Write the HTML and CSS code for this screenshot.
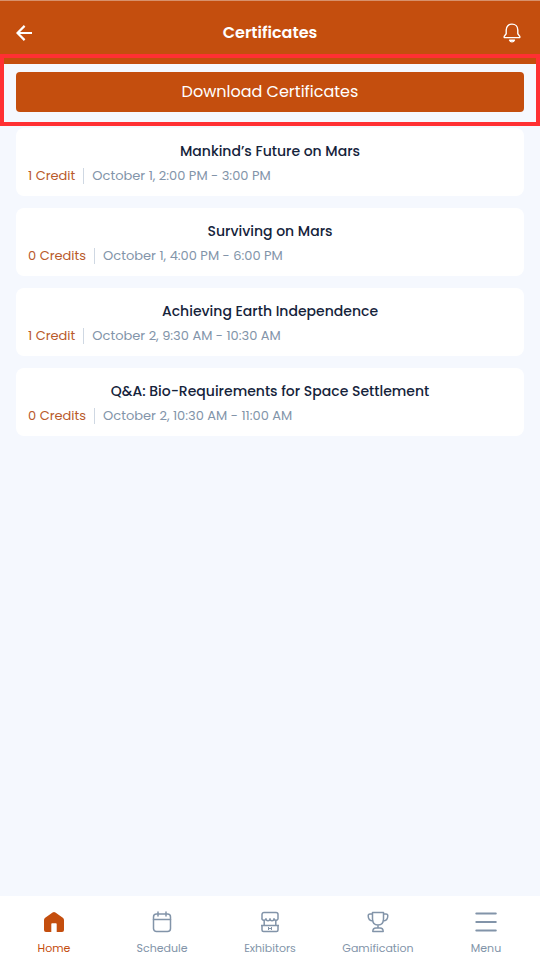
FILE: index.html
```html
<!DOCTYPE html>
<html lang="en">
<head>
<meta charset="utf-8">
<meta name="viewport" content="width=device-width, initial-scale=1">
<title>Certificates</title>
<link rel="stylesheet" href="styles.css">
</head>
<body>
<header class="topbar">
  <button class="icon-button" type="button" aria-label="Back">
    <svg width="16" height="16" viewBox="0 0 16 16" fill="none" stroke="currentColor" stroke-width="2.2"><path d="M16 8H1.8M8.6 .9L1.5 8l7.1 7.1"/></svg>
  </button>
  <h1 class="topbar-title">Certificates</h1>
  <button class="icon-button icon-button-end" type="button" aria-label="Notifications">
    <svg width="18" height="20" viewBox="0 0 18 20" fill="none" stroke="currentColor" stroke-width="1.4" stroke-linejoin="round" stroke-linecap="round"><path d="M1.200 14.600V13.400L3.200 10.800V7C3.200 3.400 5.600 1.100 9 1.100S14.800 3.400 14.800 7v3.800l2 2.600v1.200z"/><path d="M6.600 17.200c.5 1.200 1.300 1.700 2.400 1.700s1.900-.5 2.400-1.700z"/></svg>
  </button>
</header>
<main class="content">
  <section class="download">
    <button class="download-button" type="button">Download Certificates</button>
  </section>
  <ul class="sessions">
    <li class="session">
      <h2 class="session-title">Mankind’s Future on Mars</h2>
      <div class="session-meta"><span class="credits">1 Credit</span><span class="time">October 1, 2:00 PM - 3:00 PM</span></div>
    </li>
    <li class="session">
      <h2 class="session-title">Surviving on Mars</h2>
      <div class="session-meta"><span class="credits">0 Credits</span><span class="time">October 1, 4:00 PM - 6:00 PM</span></div>
    </li>
    <li class="session">
      <h2 class="session-title">Achieving Earth Independence</h2>
      <div class="session-meta"><span class="credits">1 Credit</span><span class="time">October 2, 9:30 AM - 10:30 AM</span></div>
    </li>
    <li class="session">
      <h2 class="session-title">Q&amp;A: Bio-Requirements for Space Settlement</h2>
      <div class="session-meta"><span class="credits">0 Credits</span><span class="time">October 2, 10:30 AM - 11:00 AM</span></div>
    </li>
  </ul>
</main>
<nav class="tabs" aria-label="Main">
  <a class="tab tab-active" href="#home">
    <svg class="tab-icon" viewBox="0 0 24 24" fill="currentColor"><path d="M10.600 2.600a2.300 2.300 0 0 1 2.800 0l7.400 5.200c.8.600 1.200 1.300 1.200 2.300V20a2 2 0 0 1-2 2h-5.300v-8a.8.800 0 0 0-.8-.8h-3.800a.8.800 0 0 0-.8.800v8H4a2 2 0 0 1-2-2v-9.900c0-1 .4-1.700 1.200-2.300z"/></svg>
    <span>Home</span>
  </a>
  <a class="tab" href="#schedule">
    <svg class="tab-icon" viewBox="0 0 24 24" fill="none" stroke="currentColor" stroke-width="1.500" stroke-linecap="round"><rect x="3.500" y="4" width="17" height="17.500" rx="3"/><path d="M3.500 9.500h17M8 2v4M16 2v4"/></svg>
    <span>Schedule</span>
  </a>
  <a class="tab" href="#exhibitors">
    <svg class="tab-icon" viewBox="0 0 24 24" fill="none" stroke="currentColor" stroke-width="1.500" stroke-linejoin="round"><path d="M6 2.500h12a2 2 0 0 1 2 2v3.200a2 2 0 0 1-4 1 2 2 0 0 1-4 0 2 2 0 0 1-4 0 2 2 0 0 1-4-1V4.500a2 2 0 0 1 2-2zM6.200 10v5.500M17.800 10v5.500M3 15.500h18M4 15.500V20a1.500 1.500 0 0 0 1.500 1.500h13A1.500 1.500 0 0 0 20 20v-4.500"/><path d="M10.500 17v3M13.500 17v3M10.500 18.500h3" stroke-width="1"/></svg>
    <span>Exhibitors</span>
  </a>
  <a class="tab" href="#gamification">
    <svg class="tab-icon" viewBox="0 0 24 24" fill="none" stroke="currentColor" stroke-width="1.500" stroke-linejoin="round" stroke-linecap="round"><path d="M6.500 2.500h11V9c0 3.500-2 6-5.500 6S6.500 12.500 6.500 9zM6.500 4H4C2.800 4 2.200 4.600 2.200 5.800 2.200 9 4 11 7 11M17.500 4H20c1.200 0 1.800.6 1.800 1.800C21.800 9 20 11 17 11M12 15v3M6.800 21.500c0-2.200 1.200-3.500 3.200-3.500h4c2 0 3.200 1.300 3.200 3.500z"/></svg>
    <span>Gamification</span>
  </a>
  <a class="tab" href="#menu">
    <svg class="tab-icon" viewBox="0 0 24 24" fill="none" stroke="currentColor" stroke-width="2" stroke-linecap="round"><path d="M2.300 3.500h19.500M2.300 12h19.500M2.300 20.500h19.500"/></svg>
    <span>Menu</span>
  </a>
</nav>
</body>
</html>
```
FILE: styles.css
```css
:root {
  --brand: #c44e0e;
  --ink: #15233b;
  --muted: #8294a9;
  --page: #f5f8fe;
  --highlight: #ff3033;
}

* {
  box-sizing: border-box;
}

body {
  display: flex;
  flex-direction: column;
  min-height: 100vh;
  margin: 0;
  background: var(--page);
  color: var(--ink);
  font-family: Poppins, Inter, sans-serif;
}

button {
  border: 0;
  padding: 0;
  font: inherit;
  color: inherit;
  cursor: pointer;
}

.topbar {
  display: grid;
  grid-template-columns: 1fr auto 1fr;
  align-items: center;
  height: 64px;
  padding: 0 16px;
  border-top: 1px solid #d7916c;
  background: var(--brand);
  color: #fff;
}

.topbar-title {
  margin: 0;
  font-size: 16px;
  line-height: 24px;
  font-weight: 600;
}

.icon-button {
  display: flex;
  justify-self: start;
  background: none;
}

.icon-button-end {
  justify-self: end;
  padding-right: 3px;
}

.content {
  flex: 1;
}

.download {
  position: relative;
  padding: 8px 16px 16px;
}

.download::after {
  content: "";
  position: absolute;
  inset: -10px 0 2px;
  border: 4px solid var(--highlight);
  pointer-events: none;
}

.download-button {
  display: block;
  width: 100%;
  height: 40px;
  border-radius: 4px;
  background: var(--brand);
  color: #fff;
  font-size: 16px;
  line-height: 24px;
}

.sessions {
  display: flex;
  flex-direction: column;
  gap: 12px;
  margin: 0;
  padding: 0 16px;
  list-style: none;
}

.session {
  padding: 12px;
  border-radius: 8px;
  background: #fff;
}

.session-title {
  margin: 0 0 6px;
  font-size: 14px;
  line-height: 22px;
  font-weight: 500;
  text-align: center;
}

.session-meta {
  display: flex;
  font-size: 13px;
  line-height: 16px;
}

.credits {
  padding-right: 8px;
  border-right: 1px solid #cfd8e3;
  color: #b95a2b;
}

.time {
  padding-left: 8px;
  color: var(--muted);
}

.tabs {
  display: grid;
  grid-template-columns: repeat(5, 1fr);
  height: 64px;
  padding-top: 14px;
  background: #fff;
}

.tab {
  display: flex;
  flex-direction: column;
  align-items: center;
  gap: 6px;
  color: var(--muted);
  font-size: 11px;
  line-height: 16px;
  text-decoration: none;
}

.tab-icon {
  width: 24px;
  height: 24px;
}

.tab-active {
  color: var(--brand);
}
```
